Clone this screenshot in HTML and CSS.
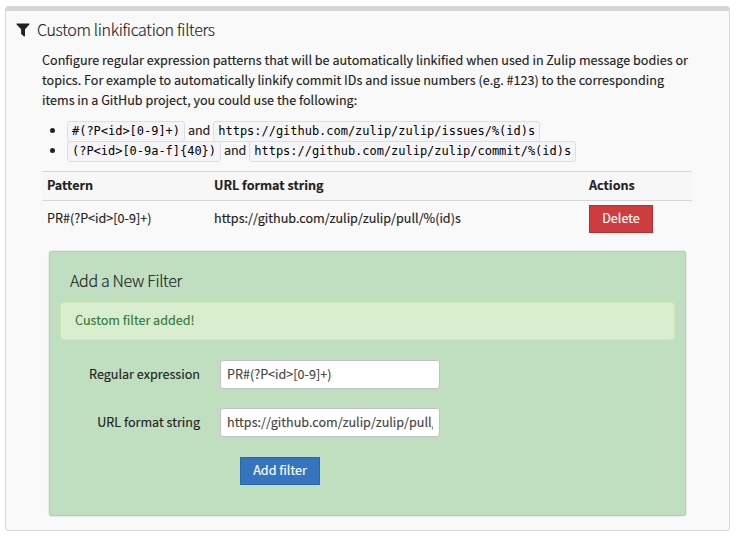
FILE: index.html
```
<!DOCTYPE html>
<html lang="en">
<head>
<meta charset="utf-8">
<title>Custom linkification filters</title>
<link rel="stylesheet" href="styles.css">
</head>
<body>
<section class="settings">
  <header class="settings-title">
    <svg class="filter-icon" viewBox="0 0 14 14" aria-hidden="true"><path d="M.8.4H13.2Q14 .9 13.4 1.6L9 6.3V13.1Q8.8 13.8 8.1 13.5L5.4 11.2Q5.1 10.9 5.1 10.5V6.3L.6 1.6Q0 .9.8.4Z"/></svg>
    <h1>Custom linkification filters</h1>
  </header>
  <div class="settings-body">
    <p class="intro">Configure regular expression patterns that will be automatically linkified when used in Zulip message bodies or<br>topics. For example to automatically linkify commit IDs and issue numbers (e.g. #123) to the corresponding<br>items in a GitHub project, you could use the following:</p>
    <ul class="examples">
      <li><code>#(?P&lt;id&gt;[0-9]+)</code><span class="and">and</span><code>https://github.com/zulip/zulip/issues/%(id)s</code></li>
      <li><code>(?P&lt;id&gt;[0-9a-f]{40})</code><span class="and">and</span><code>https://github.com/zulip/zulip/commit/%(id)s</code></li>
    </ul>
    <table class="filters">
      <thead><tr><th class="col-pattern">Pattern</th><th class="col-url">URL format string</th><th>Actions</th></tr></thead>
      <tbody><tr><td>PR#(?P&lt;id&gt;[0-9]+)</td><td>https://github.com/zulip/zulip/pull/%(id)s</td><td class="action"><button class="button danger">Delete</button></td></tr></tbody>
    </table>
    <form class="new-filter">
      <h2>Add a New Filter</h2>
      <div class="alert">Custom filter added!</div>
      <div class="field"><label for="pattern">Regular expression</label><input id="pattern" type="text" value="PR#(?P&lt;id&gt;[0-9]+)"></div>
      <div class="field"><label for="url">URL format string</label><input id="url" type="text" value="https://github.com/zulip/zulip/pull/%(id)s"></div>
      <button class="button primary" type="button">Add filter</button>
    </form>
  </div>
</section>
</body>
</html>
```

FILE: styles.css
```
* { box-sizing: border-box; }
body {
  margin: 0;
  background: #fff;
  color: #222;
  font: 12.58px/20px "Noto Sans CJK SC", "Open Sans", sans-serif;
  -webkit-text-stroke: .14px;
}
.settings {
  width: 725px;
  height: 525px;
  margin: 6px 0 0 5px;
  border: 1px solid #d6d6d6;
  border-top-width: 5px;
  border-radius: 4px;
  background: #f9f9f9;
}
.settings-title { display: flex; align-items: center; height: 37px; padding-left: 10px; }
.filter-icon { width: 14px; height: 14px; margin: 1px 7px 0 0; fill: #222; }
h1, h2 {
  margin: 0;
  font-weight: 300;
  font-size: 16px;
  line-height: 20px;
  letter-spacing: -.33px;
}
h1 { margin-top: -2px; }
.settings-body { padding: 2px 37px 0 36px; }
.intro { margin: 0; white-space: nowrap; }
.examples { margin: 9px 0 12px; padding-left: 25px; }
.examples li { height: 20px; line-height: 20px; white-space: nowrap; }
.examples li::marker { font-size: 14px; }
code {
  display: inline-block;
  height: 21px;
  margin-top: 1px;
  padding: 0 4px;
  border: 1px solid #dddde8;
  border-radius: 3px;
  background: #f5f5f8;
  color: #000;
  font: 12px/18px "DejaVu Sans Mono", monospace;
  letter-spacing: -.024px;
  vertical-align: top;
  -webkit-text-stroke: 0;
}
.and { margin: 0 3px; letter-spacing: -.1px; }
.filters { width: 650px; border-collapse: collapse; table-layout: fixed; }
.filters th {
  height: 29px;
  padding: 0 5px 2px;
  border: solid #d6d6d6;
  border-width: 1px 0;
  background: #f7f7f7;
  text-align: left;
  font-weight: 700;
}
.filters td { height: 36px; padding: 0 5px 2px; }
.filters .action { padding-bottom: 0; }
.col-pattern { width: 167px; }
.col-url { width: 375px; }
.button {
  display: block;
  height: 28px;
  padding: 0 0 2px;
  border: 1px solid;
  color: #fff;
  font: inherit;
  line-height: 24px;
  -webkit-text-stroke: inherit;
}
.danger { width: 64px; background: #cd3c3e; border-color: #bd2c2f; }
.primary { width: 80px; margin: 20px 0 0 180px; background: #3674bf; border-color: #2967ae; }
.new-filter {
  width: 637px;
  height: 265px;
  margin: 14px 0 0 7px;
  padding: 19px 11px 0;
  border-radius: 3px;
  background: #c0dfc0;
  box-shadow: inset 0 0 0 1px rgba(0, 0, 0, .07), 0 0 2px rgba(0, 0, 0, .2);
}
h2 { padding-left: 10px; }
.alert {
  height: 38px;
  margin-top: 12px;
  padding: 0 14px;
  border: 1px solid #cfe6bb;
  border-radius: 4px;
  background: #d9edcf;
  color: #34793a;
  line-height: 34px;
}
.field { display: flex; align-items: center; height: 29px; margin-top: 19px; }
.alert + .field { margin-top: 20px; }
.field label { width: 140px; margin-right: 20px; text-align: right; }
.field input {
  width: 220px;
  height: 29px;
  padding: 0 6px 2px;
  border: 1px solid #c4c0c6;
  border-radius: 3px;
  background: #fff;
  color: #444;
  font: inherit;
  -webkit-text-stroke: inherit;
}
```
